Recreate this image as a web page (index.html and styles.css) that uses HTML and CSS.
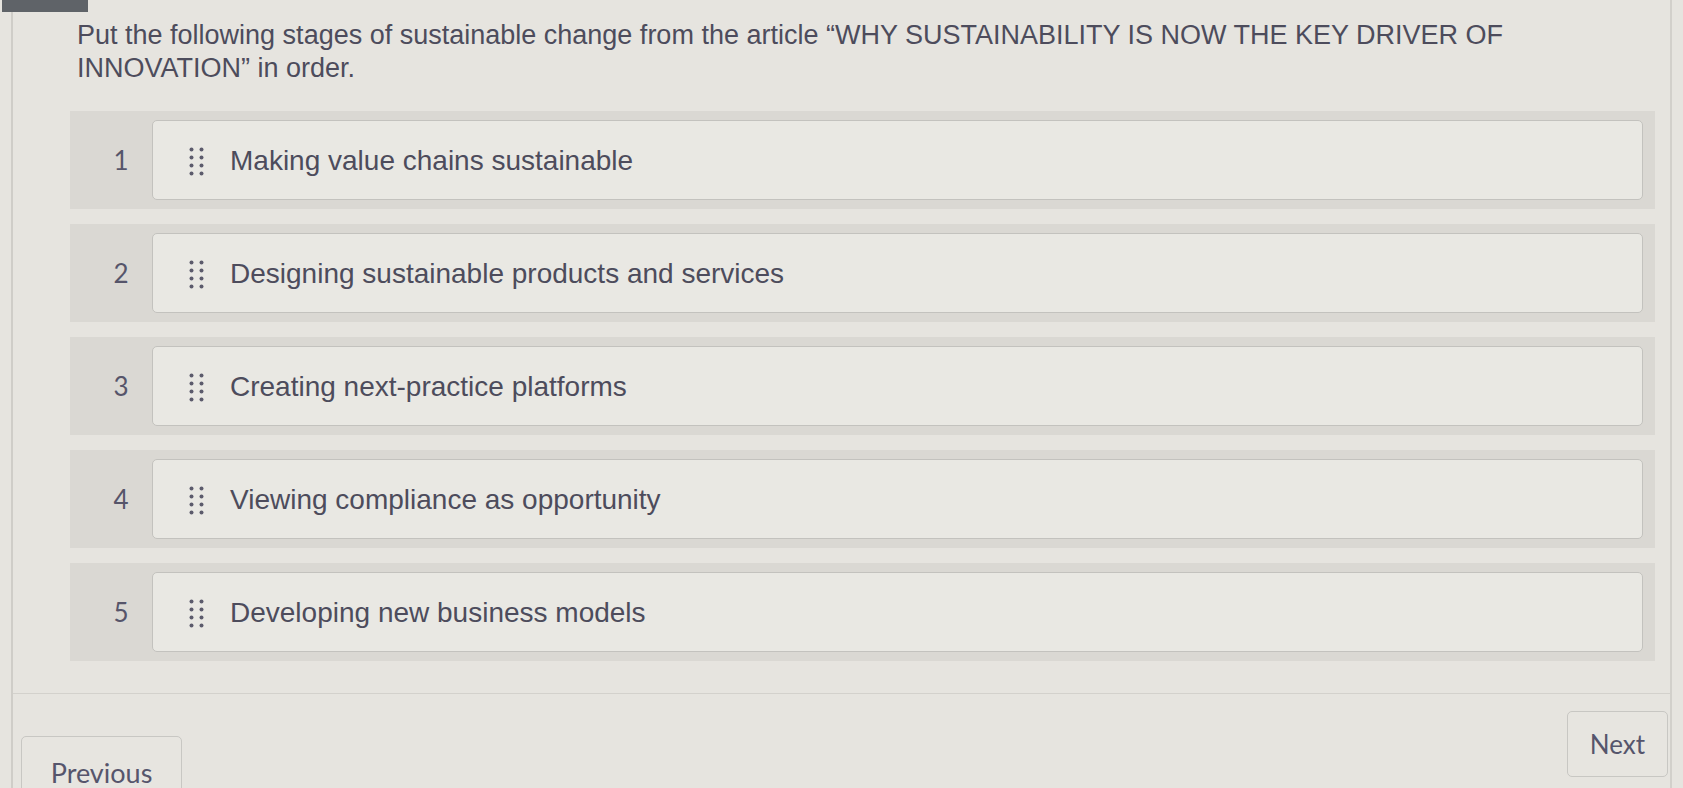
FILE: index.html
```html
<!DOCTYPE html>
<html>
<head>
<meta charset="utf-8">
<link rel="stylesheet" href="styles.css">
</head>
<body>
<div class="page">
  <div class="tab"></div>
  <h1 class="title">Put the following stages of sustainable change from the article “WHY SUSTAINABILITY IS NOW THE KEY DRIVER OF INNOVATION” in order.</h1>
  <ol class="list">
    <li class="band"><span class="num">1</span><div class="card"><svg class="handle" width="15" height="29" viewBox="0 0 15 29"><g fill="#5c5b6c"><circle cx="2.5" cy="2.5" r="2"/><circle cx="12.5" cy="2.5" r="2"/><circle cx="2.5" cy="10.5" r="2"/><circle cx="12.5" cy="10.5" r="2"/><circle cx="2.5" cy="18.5" r="2"/><circle cx="12.5" cy="18.5" r="2"/><circle cx="2.5" cy="26.5" r="2"/><circle cx="12.5" cy="26.5" r="2"/></g></svg><span class="label">Making value chains sustainable</span></div></li>
    <li class="band"><span class="num">2</span><div class="card"><svg class="handle" width="15" height="29" viewBox="0 0 15 29"><g fill="#5c5b6c"><circle cx="2.5" cy="2.5" r="2"/><circle cx="12.5" cy="2.5" r="2"/><circle cx="2.5" cy="10.5" r="2"/><circle cx="12.5" cy="10.5" r="2"/><circle cx="2.5" cy="18.5" r="2"/><circle cx="12.5" cy="18.5" r="2"/><circle cx="2.5" cy="26.5" r="2"/><circle cx="12.5" cy="26.5" r="2"/></g></svg><span class="label">Designing sustainable products and services</span></div></li>
    <li class="band"><span class="num">3</span><div class="card"><svg class="handle" width="15" height="29" viewBox="0 0 15 29"><g fill="#5c5b6c"><circle cx="2.5" cy="2.5" r="2"/><circle cx="12.5" cy="2.5" r="2"/><circle cx="2.5" cy="10.5" r="2"/><circle cx="12.5" cy="10.5" r="2"/><circle cx="2.5" cy="18.5" r="2"/><circle cx="12.5" cy="18.5" r="2"/><circle cx="2.5" cy="26.5" r="2"/><circle cx="12.5" cy="26.5" r="2"/></g></svg><span class="label">Creating next-practice platforms</span></div></li>
    <li class="band"><span class="num">4</span><div class="card"><svg class="handle" width="15" height="29" viewBox="0 0 15 29"><g fill="#5c5b6c"><circle cx="2.5" cy="2.5" r="2"/><circle cx="12.5" cy="2.5" r="2"/><circle cx="2.5" cy="10.5" r="2"/><circle cx="12.5" cy="10.5" r="2"/><circle cx="2.5" cy="18.5" r="2"/><circle cx="12.5" cy="18.5" r="2"/><circle cx="2.5" cy="26.5" r="2"/><circle cx="12.5" cy="26.5" r="2"/></g></svg><span class="label">Viewing compliance as opportunity</span></div></li>
    <li class="band"><span class="num">5</span><div class="card"><svg class="handle" width="15" height="29" viewBox="0 0 15 29"><g fill="#5c5b6c"><circle cx="2.5" cy="2.5" r="2"/><circle cx="12.5" cy="2.5" r="2"/><circle cx="2.5" cy="10.5" r="2"/><circle cx="12.5" cy="10.5" r="2"/><circle cx="2.5" cy="18.5" r="2"/><circle cx="12.5" cy="18.5" r="2"/><circle cx="2.5" cy="26.5" r="2"/><circle cx="12.5" cy="26.5" r="2"/></g></svg><span class="label">Developing new business models</span></div></li>
  </ol>
  <div class="divider"></div>
  <div class="footer">
    <button class="btn btn-prev">Previous</button>
    <button class="btn btn-next">Next</button>
  </div>
</div>
</body>
</html>
```
FILE: styles.css
```css
html, body {
  margin: 0;
  padding: 0;
  background: #e6e4df;
  overflow: hidden;
}
.page {
  position: relative;
  display: flow-root;
  box-sizing: border-box;
  margin-left: 11px;
  width: 1661px;
  height: 788px;
  border-left: 2px solid #cfcdc8;
  border-right: 2px solid #d2d0cb;
}
.tab {
  position: absolute;
  left: -11px;
  top: 0;
  width: 86px;
  height: 12px;
  background: #5f6368;
}
.title {
  margin: 19px 0 0 64px;
  width: 1450px;
  font-family: "Liberation Sans", Arial, sans-serif;
  font-weight: normal;
  font-size: 27px;
  line-height: 33px;
  color: #4d4c5c;
}
.list {
  list-style: none;
  margin: 26px 0 0 57px;
  padding: 0;
  width: 1585px;
  display: flex;
  flex-direction: column;
  gap: 15px;
}
.band {
  display: flex;
  align-items: stretch;
  padding: 9px 12px 9px 0;
  background: #dad8d3;
}
.num {
  width: 82px;
  flex: none;
  display: flex;
  align-items: center;
  justify-content: center;
  font-family: Lato, "Liberation Sans", sans-serif;
  font-size: 26px;
  color: #56556a;
  padding-left: 20px;
  box-sizing: border-box;
}
.card {
  flex: 1;
  height: 80px;
  box-sizing: border-box;
  display: flex;
  align-items: center;
  padding-left: 36px;
  border: 1.5px solid #c3c2be;
  border-radius: 5px;
  background: #e9e8e3;
}
.handle {
  flex: none;
  margin-right: 26px;
  margin-top: 2px;
}
.label {
  font-family: "Liberation Sans", Arial, sans-serif;
  font-size: 28px;
  color: #4d4c5c;
  padding-top: 2px;
}
.divider {
  margin-top: 32px;
  height: 1px;
  background: #d3d1cc;
}
.footer {
  display: flex;
  justify-content: space-between;
  align-items: flex-start;
  padding: 17px 2px 0 8px;
}
.btn {
  font-family: Lato, "Liberation Sans", sans-serif;
  font-size: 26px;
  color: #56556c;
  background: #e7e5e0;
  border: 1.5px solid #c8c7c3;
  border-radius: 5px;
  height: 66px;
  cursor: pointer;
}
.btn-prev {
  margin-top: 25px;
  width: 161px;
  padding: 6px 0 0 0;
  font-size: 27px;
}
.btn-next {
  width: 101px;
  padding: 0;
}
```
